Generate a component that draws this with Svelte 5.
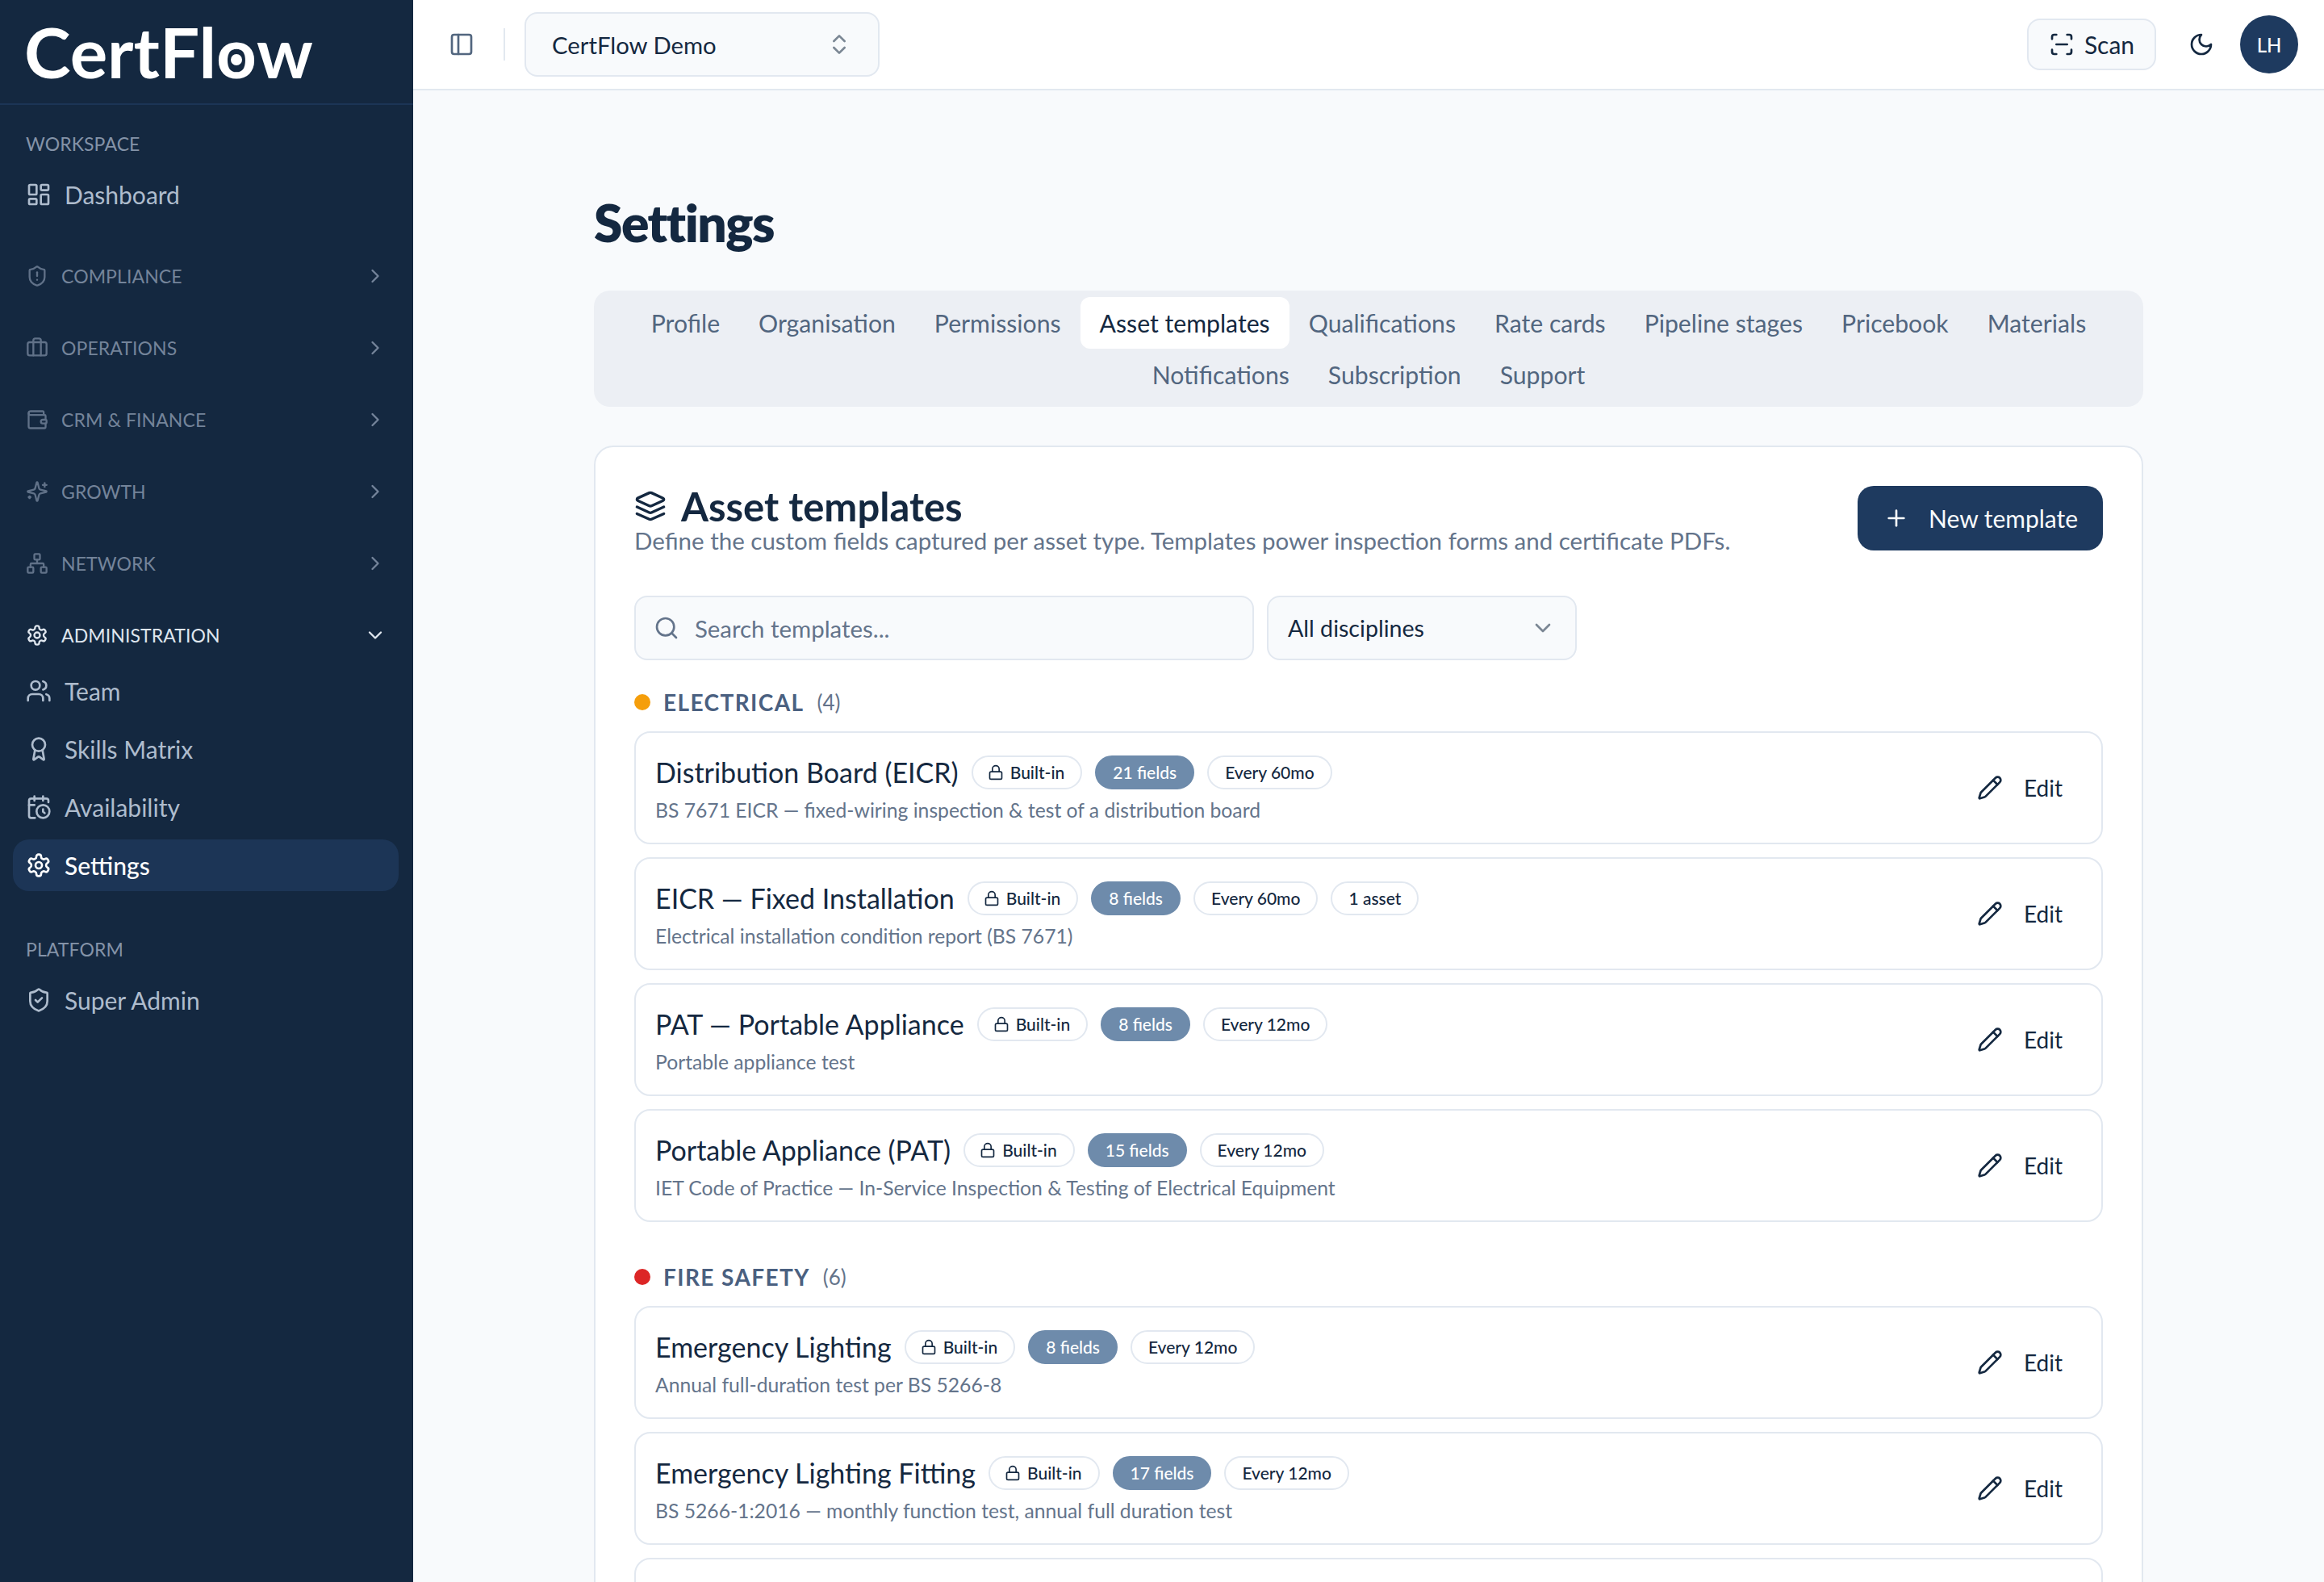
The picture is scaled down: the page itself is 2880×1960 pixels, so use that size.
<script>
    const icons = {
        dashboard: '<rect width="7" height="9" x="3" y="3" rx="1"/><rect width="7" height="5" x="14" y="3" rx="1"/><rect width="7" height="9" x="14" y="12" rx="1"/><rect width="7" height="5" x="3" y="16" rx="1"/>',
        shieldAlert: '<path d="M20 13c0 5-3.5 7.5-7.66 8.95a1 1 0 0 1-.67-.01C7.5 20.5 4 18 4 13V6a1 1 0 0 1 1-1c2 0 4.5-1.2 6.24-2.72a1.17 1.17 0 0 1 1.52 0C14.51 3.81 17 5 19 5a1 1 0 0 1 1 1z"/><path d="M12 8v4"/><path d="M12 16h.01"/>',
        shieldCheck: '<path d="M20 13c0 5-3.5 7.5-7.66 8.95a1 1 0 0 1-.67-.01C7.5 20.5 4 18 4 13V6a1 1 0 0 1 1-1c2 0 4.5-1.2 6.24-2.72a1.17 1.17 0 0 1 1.52 0C14.51 3.81 17 5 19 5a1 1 0 0 1 1 1z"/><path d="m9 12 2 2 4-4"/>',
        briefcase: '<path d="M16 20V4a2 2 0 0 0-2-2h-4a2 2 0 0 0-2 2v16"/><rect width="20" height="14" x="2" y="6" rx="2"/>',
        wallet: '<path d="M19 7V4a1 1 0 0 0-1-1H5a2 2 0 0 0 0 4h15a1 1 0 0 1 1 1v4h-3a2 2 0 0 0 0 4h3a1 1 0 0 0 1-1v-2a1 1 0 0 0-1-1"/><path d="M3 5v14a2 2 0 0 0 2 2h15a1 1 0 0 0 1-1v-4"/>',
        sparkles: '<path d="M9.937 15.5A2 2 0 0 0 8.5 14.063l-6.135-1.582a.5.5 0 0 1 0-.962L8.5 9.936A2 2 0 0 0 9.937 8.5l1.582-6.135a.5.5 0 0 1 .963 0L14.063 8.5A2 2 0 0 0 15.5 9.937l6.135 1.581a.5.5 0 0 1 0 .964L15.5 14.063a2 2 0 0 0-1.437 1.437l-1.582 6.135a.5.5 0 0 1-.963 0z"/><path d="M20 3v4"/><path d="M22 5h-4"/><path d="M4 17v2"/><path d="M5 18H3"/>',
        network: '<rect x="16" y="16" width="6" height="6" rx="1"/><rect x="2" y="16" width="6" height="6" rx="1"/><rect x="9" y="2" width="6" height="6" rx="1"/><path d="M5 16v-3a1 1 0 0 1 1-1h12a1 1 0 0 1 1 1v3"/><path d="M12 12V8"/>',
        settings: '<path d="M12.22 2h-.44a2 2 0 0 0-2 2v.18a2 2 0 0 1-1 1.73l-.43.25a2 2 0 0 1-2 0l-.15-.08a2 2 0 0 0-2.73.73l-.22.38a2 2 0 0 0 .73 2.73l.15.1a2 2 0 0 1 1 1.72v.51a2 2 0 0 1-1 1.74l-.15.09a2 2 0 0 0-.73 2.73l.22.38a2 2 0 0 0 2.73.73l.15-.08a2 2 0 0 1 2 0l.43.25a2 2 0 0 1 1 1.73V20a2 2 0 0 0 2 2h.44a2 2 0 0 0 2-2v-.18a2 2 0 0 1 1-1.73l.43-.25a2 2 0 0 1 2 0l.15.08a2 2 0 0 0 2.73-.73l.22-.39a2 2 0 0 0-.73-2.73l-.15-.08a2 2 0 0 1-1-1.74v-.5a2 2 0 0 1 1-1.74l.15-.09a2 2 0 0 0 .73-2.73l-.22-.38a2 2 0 0 0-2.73-.73l-.15.08a2 2 0 0 1-2 0l-.43-.25a2 2 0 0 1-1-1.73V4a2 2 0 0 0-2-2z"/><circle cx="12" cy="12" r="3"/>',
        users: '<path d="M16 21v-2a4 4 0 0 0-4-4H6a4 4 0 0 0-4 4v2"/><circle cx="9" cy="7" r="4"/><path d="M22 21v-2a4 4 0 0 0-3-3.87"/><path d="M16 3.13a4 4 0 0 1 0 7.75"/>',
        award: '<path d="m15.477 12.89 1.515 8.526a.5.5 0 0 1-.81.47l-3.58-2.687a1 1 0 0 0-1.197 0l-3.586 2.686a.5.5 0 0 1-.81-.469l1.514-8.526"/><circle cx="12" cy="8" r="6"/>',
        calendarClock: '<path d="M21 7.5V6a2 2 0 0 0-2-2H5a2 2 0 0 0-2 2v14a2 2 0 0 0 2 2h3.5"/><path d="M16 2v4"/><path d="M8 2v4"/><path d="M3 10h5"/><path d="M17.5 17.5 16 16.3V14"/><circle cx="16" cy="16" r="6"/>',
        panel: '<rect width="18" height="18" x="3" y="3" rx="2"/><path d="M9 3v18"/>',
        upDown: '<path d="m7 15 5 5 5-5"/><path d="m7 9 5-5 5 5"/>',
        scan: '<path d="M3 7V5a2 2 0 0 1 2-2h2"/><path d="M17 3h2a2 2 0 0 1 2 2v2"/><path d="M21 17v2a2 2 0 0 1-2 2h-2"/><path d="M7 21H5a2 2 0 0 1-2-2v-2"/><path d="M7 12h10"/>',
        moon: '<path d="M12 3a6 6 0 0 0 9 9 9 9 0 1 1-9-9Z"/>',
        layers: '<path d="m12.83 2.18a2 2 0 0 0-1.66 0L2.6 6.08a1 1 0 0 0 0 1.83l8.58 3.91a2 2 0 0 0 1.66 0l8.58-3.9a1 1 0 0 0 0-1.83Z"/><path d="m22 17.65-9.17 4.16a2 2 0 0 1-1.66 0L2 17.65"/><path d="m22 12.65-9.17 4.16a2 2 0 0 1-1.66 0L2 12.65"/>',
        search: '<path d="m21 21-4.3-4.3"/><circle cx="11" cy="11" r="8"/>',
        down: '<path d="m6 9 6 6 6-6"/>',
        right: '<path d="m9 18 6-6-6-6"/>',
        lock: '<rect width="18" height="11" x="3" y="11" rx="2" ry="2"/><path d="M7 11V7a5 5 0 0 1 10 0v4"/>',
        pencil: '<path d="M21.174 6.812a1 1 0 0 0-3.986-3.987L3.842 16.174a2 2 0 0 0-.5.83l-1.321 4.352a.5.5 0 0 0 .623.622l4.353-1.32a2 2 0 0 0 .83-.497z"/><path d="m15 5 4 4"/>',
        plus: '<path d="M5 12h14"/><path d="M12 5v14"/>'
    }

    const groups = [
        { label: 'Compliance', icon: 'shieldAlert' },
        { label: 'Operations', icon: 'briefcase' },
        { label: 'CRM & Finance', icon: 'wallet' },
        { label: 'Growth', icon: 'sparkles' },
        { label: 'Network', icon: 'network' }
    ]

    const adminItems = [
        { label: 'Team', icon: 'users' },
        { label: 'Skills Matrix', icon: 'award' },
        { label: 'Availability', icon: 'calendarClock' },
        { label: 'Settings', icon: 'settings', active: true }
    ]

    const tabs = ['Profile', 'Organisation', 'Permissions', 'Asset templates', 'Qualifications', 'Rate cards', 'Pipeline stages', 'Pricebook', 'Materials', 'Notifications', 'Subscription', 'Support']

    const sections = [
        {
            name: 'Electrical', count: 4, color: '#f59e0b',
            items: [
                { title: 'Distribution Board (EICR)', fields: 21, every: 60, desc: 'BS 7671 EICR — fixed-wiring inspection & test of a distribution board' },
                { title: 'EICR — Fixed Installation', fields: 8, every: 60, assets: '1 asset', desc: 'Electrical installation condition report (BS 7671)' },
                { title: 'PAT — Portable Appliance', fields: 8, every: 12, desc: 'Portable appliance test' },
                { title: 'Portable Appliance (PAT)', fields: 15, every: 12, desc: 'IET Code of Practice — In-Service Inspection & Testing of Electrical Equipment' }
            ]
        },
        {
            name: 'Fire Safety', count: 6, color: '#dc2626',
            items: [
                { title: 'Emergency Lighting', fields: 8, every: 12, desc: 'Annual full-duration test per BS 5266-8' },
                { title: 'Emergency Lighting Fitting', fields: 17, every: 12, desc: 'BS 5266-1:2016 — monthly function test, annual full duration test' }
            ]
        }
    ]
</script>

{#snippet icon(name, size, cls = '')}
    <svg class="icon {cls}" width={size} height={size} viewBox="0 0 24 24" fill="none" stroke="currentColor" stroke-width="2" stroke-linecap="round" stroke-linejoin="round">{@html icons[name]}</svg>
{/snippet}

<div class="app">
    <aside class="sidebar">
        <div class="brand">
            <span class="logo">CertFl<span class="logo-o">o</span>w</span>
        </div>
        <nav class="nav">
            <div class="nav-label">Workspace</div>
            <a class="nav-item">{@render icon('dashboard', 32)}<span>Dashboard</span></a>

            {#each groups as g}
                <div class="group">
                    {@render icon(g.icon, 28, 'group-icon')}
                    <span class="group-name">{g.label}</span>
                    {@render icon('right', 28, 'chev')}
                </div>
            {/each}

            <div class="group open">
                {@render icon('settings', 28)}
                <span class="group-name">Administration</span>
                {@render icon('down', 28, 'chev')}
            </div>
            <div class="group-items">
                {#each adminItems as item}
                    <a class="nav-item" class:active={item.active}>{@render icon(item.icon, 32)}<span>{item.label}</span></a>
                {/each}
            </div>

            <div class="nav-label platform">Platform</div>
            <a class="nav-item">{@render icon('shieldCheck', 32)}<span>Super Admin</span></a>
        </nav>
    </aside>

    <div class="main">
        <header class="topbar">
            <button class="icon-btn slate">{@render icon('panel', 32)}</button>
            <div class="sep"></div>
            <button class="org-select">
                <span>CertFlow Demo</span>
                {@render icon('upDown', 32)}
            </button>
            <div class="spacer"></div>
            <button class="scan">{@render icon('scan', 32)}<span>Scan</span></button>
            <button class="icon-btn">{@render icon('moon', 32)}</button>
            <div class="avatar">LH</div>
        </header>

        <main class="content">
            <h1>Settings</h1>

            <div class="tabs">
                {#each tabs as t}
                    <button class="tab" class:selected={t === 'Asset templates'}>{t}</button>
                {/each}
            </div>

            <section class="card">
                <div class="card-head">
                    <div>
                        <h2>{@render icon('layers', 40)}Asset templates</h2>
                        <p class="sub">Define the custom fields captured per asset type. Templates power inspection forms and certificate PDFs.</p>
                    </div>
                    <button class="primary">{@render icon('plus', 32)}<span>New template</span></button>
                </div>

                <div class="filters">
                    <div class="search">
                        {@render icon('search', 32)}
                        <span>Search templates...</span>
                    </div>
                    <div class="select">
                        <span>All disciplines</span>
                        {@render icon('down', 32)}
                    </div>
                </div>

                {#each sections as s}
                    <div class="section">
                        <div class="section-head">
                            <span class="dot" style="background: {s.color}"></span>
                            <span class="section-name">{s.name}</span>
                            <span class="count">({s.count})</span>
                        </div>
                        <div class="list">
                            {#each s.items as item}
                                <div class="row">
                                    <div class="row-main">
                                        <div class="row-title">
                                            <span class="title">{item.title}</span>
                                            <span class="pill built">{@render icon('lock', 20)}Built-in</span>
                                            <span class="pill filled">{item.fields} fields</span>
                                            <span class="pill">Every {item.every}mo</span>
                                            {#if item.assets}<span class="pill">{item.assets}</span>{/if}
                                        </div>
                                        <div class="desc">{item.desc}</div>
                                    </div>
                                    <button class="edit">{@render icon('pencil', 32)}<span>Edit</span></button>
                                </div>
                            {/each}
                        </div>
                    </div>
                {/each}
                <div class="row blank"></div>
            </section>
        </main>
    </div>
</div>

<style>
    :global(body) {
        margin: 0;
        background: #f8fafc;
        font-family: "Lato", "Open Sans", sans-serif;
        color: #142840;
    }

    button {
        font: inherit;
        color: inherit;
        background: none;
        border: none;
        padding: 0;
        white-space: nowrap;
    }

    .icon {
        flex: none;
        display: block;
    }

    .app {
        display: flex;
        height: 1960px;
        overflow: hidden;
    }

    .sidebar {
        width: 512px;
        flex: none;
        background: #142840;
        color: #aebccd;
    }

    .brand {
        height: 128px;
        padding-left: 30px;
        display: flex;
        align-items: center;
        border-bottom: 2px solid #1c3556;
    }

    .logo {
        color: #fff;
        font-size: 87px;
        font-weight: 700;
        line-height: 1;
        margin-top: -2px;
    }

    .logo-o {
        position: relative;
    }

    .logo-o::after {
        content: "";
        position: absolute;
        left: 50%;
        top: 60%;
        width: 14px;
        height: 14px;
        margin: -7px 0 0 -7px;
        border-radius: 50%;
        background: #fff;
    }

    .nav {
        padding: 32px 18px 0 16px;
    }

    .nav-label {
        padding-left: 16px;
        font-size: 23px;
        line-height: 32px;
        letter-spacing: 0.1px;
        text-transform: uppercase;
        color: #8493a8;
        margin-bottom: 15px;
    }

    .nav-label.platform {
        margin-top: 56px;
    }

    .nav-item {
        height: 64px;
        display: flex;
        align-items: center;
        gap: 16px;
        padding: 0 16px;
        border-radius: 20px;
        font-size: 30px;
    }

    .nav-item.active {
        background: #1c3556;
        color: #fff;
        font-weight: 500;
    }

    .group {
        height: 40px;
        margin-top: 49px;
        display: flex;
        align-items: center;
        gap: 16px;
        padding: 0 16px;
        color: #74849a;
        font-size: 23px;
        letter-spacing: 0.1px;
        text-transform: uppercase;
    }

    .group.open {
        color: #dfe6ee;
    }

    .group-name {
        flex: 1;
    }

    .group :global(.group-icon) {
        opacity: 0.8;
    }

    .group :global(.chev) {
        margin-right: -1px;
    }

    .group-items {
        margin-top: 17px;
        display: flex;
        flex-direction: column;
        gap: 8px;
    }

    .main {
        flex: 1;
        min-width: 0;
    }

    .topbar {
        height: 110px;
        background: #fff;
        border-bottom: 2px solid #e2e8f0;
        padding: 0 32px 0 36px;
        display: flex;
        align-items: center;
    }

    .icon-btn {
        width: 48px;
        height: 48px;
        display: flex;
        align-items: center;
        justify-content: center;
    }

    .icon-btn.slate {
        color: #52667f;
    }

    .sep {
        width: 2px;
        height: 40px;
        background: #e2e8f0;
        margin: 0 24px 0 28px;
    }

    .org-select {
        width: 440px;
        height: 80px;
        display: flex;
        align-items: center;
        justify-content: space-between;
        padding: 0 32px;
        background: #f8fafc;
        border: 2px solid #e2e8f0;
        border-radius: 16px;
        font-size: 29.3px;
        box-sizing: border-box;
    }

    .org-select :global(.icon) {
        color: #7b8794;
    }

    .spacer {
        flex: 1;
    }

    .scan {
        height: 64px;
        width: 160px;
        display: flex;
        align-items: center;
        justify-content: center;
        gap: 12px;
        box-sizing: border-box;
        background: #f8fafc;
        border: 2px solid #e2e8f0;
        border-radius: 16px;
        font-size: 30px;
    }

    .scan + .icon-btn {
        margin: 0 24px 0 32px;
    }

    .avatar {
        width: 72px;
        height: 72px;
        border-radius: 50%;
        background: #1e3a5f;
        color: #f8fafc;
        display: flex;
        align-items: center;
        justify-content: center;
        font-size: 24px;
        font-weight: 500;
    }

    .content {
        width: 1920px;
        margin: 0 auto;
        padding-top: 128px;
    }

    h1 {
        margin: 0 0 48px;
        font-size: 64px;
        line-height: 72px;
        font-weight: 800;
        letter-spacing: -1.5px;
    }

    .tabs {
        box-sizing: border-box;
        background: #eceff4;
        border-radius: 20px;
        padding: 8px;
        display: flex;
        flex-wrap: wrap;
        justify-content: center;
    }

    .tab {
        height: 64px;
        padding: 0 24px;
        border-radius: 12px;
        font-size: 30.2px;
        color: #52667f;
    }

    .tab.selected {
        background: #fff;
        color: #142840;
    }

    .card {
        margin-top: 48px;
        box-sizing: border-box;
        background: #fff;
        border: 2px solid #e2e8f0;
        border-radius: 24px;
        padding: 48px;
    }

    .card-head {
        display: flex;
        justify-content: space-between;
        align-items: flex-start;
    }

    h2 {
        margin: 0;
        display: flex;
        align-items: center;
        gap: 18px;
        font-size: 49px;
        line-height: 50px;
        font-weight: 700;
    }

    .sub {
        margin: 0;
        font-size: 29.5px;
        line-height: 36px;
        color: #64748b;
    }

    .primary {
        height: 80px;
        width: 304px;
        flex: none;
        display: flex;
        align-items: center;
        gap: 24px;
        padding: 0 32px;
        box-sizing: border-box;
        background: #1e3a5f;
        color: #f8fafc;
        border-radius: 20px;
        font-size: 30px;
    }

    .filters {
        display: flex;
        gap: 16px;
        margin-top: 50px;
    }

    .search, .select {
        height: 80px;
        box-sizing: border-box;
        background: #f8fafc;
        border: 2px solid #e2e8f0;
        border-radius: 16px;
        display: flex;
        align-items: center;
    }

    .search {
        width: 768px;
        padding: 0 22px;
        gap: 19px;
        font-size: 29.4px;
        color: #64748b;
    }

    .select {
        width: 384px;
        padding: 0 24px;
        justify-content: space-between;
        font-size: 28.6px;
    }

    .select :global(.icon) {
        color: #7b8794;
    }

    .section {
        margin-top: 32px;
    }

    .section + .section {
        margin-top: 48px;
    }

    .section-head {
        height: 40px;
        display: flex;
        align-items: center;
        margin-bottom: 16px;
    }

    .dot {
        width: 20px;
        height: 20px;
        border-radius: 50%;
        margin-right: 16px;
    }

    .section-name {
        font-size: 28px;
        font-weight: 700;
        letter-spacing: 1.4px;
        text-transform: uppercase;
        color: #4a6080;
        margin-right: 16px;
    }

    .count {
        font-size: 26px;
        color: #64748b;
    }

    .list {
        display: flex;
        flex-direction: column;
        gap: 16px;
    }

    .row {
        height: 140px;
        box-sizing: border-box;
        border: 2px solid #e2e8f0;
        border-radius: 20px;
        padding: 0 48px 0 24px;
        display: flex;
        align-items: center;
        justify-content: space-between;
    }

    .row.blank {
        margin-top: 16px;
    }

    .row-main {
        padding-top: 6px;
    }

    .row-title {
        display: flex;
        align-items: center;
        gap: 16px;
        height: 44px;
    }

    .title {
        font-size: 34px;
    }

    .pill {
        height: 42px;
        box-sizing: border-box;
        display: inline-flex;
        align-items: center;
        gap: 8px;
        padding: 0 20px;
        border: 2px solid #e2e8f0;
        border-radius: 21px;
        font-size: 21px;
        font-weight: 500;
    }

    .pill.built {
        padding-left: 18px;
    }

    .pill.filled {
        background: #6e8bab;
        border-color: #6e8bab;
        color: #fff;
    }

    .desc {
        margin-top: 5px;
        font-size: 24.7px;
        line-height: 40px;
        color: #64748b;
    }

    .edit {
        display: flex;
        align-items: center;
        gap: 26px;
        font-size: 28px;
    }
</style>
